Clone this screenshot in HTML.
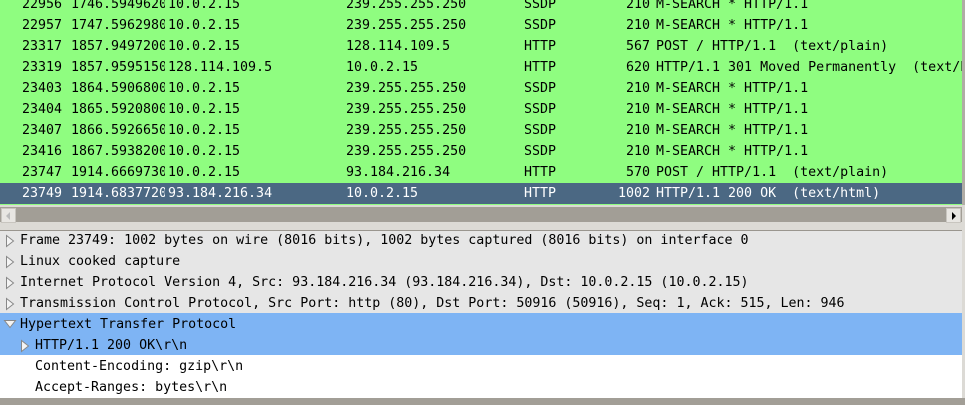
<!DOCTYPE html>
<html><head><style>
body{margin:0;width:965px;height:405px;overflow:hidden;background:#dcdad5;font-family:"DejaVu Sans Mono","Liberation Mono",monospace;font-size:13.3px;color:#000;position:relative}
.list{position:absolute;left:0;top:0;width:962px;height:205px;background:#8ffd80;overflow:hidden}
.r{position:absolute;left:0;width:962px;height:21px;line-height:21px;white-space:pre}
.r span{position:absolute;top:0;overflow:hidden}
.sel{background:#4b6883;color:#fff}
.no{left:0;width:62px;text-align:right}
.t{left:71px;width:94px}
.s{left:168px}.d{left:346px}.p{left:524px}
.l{left:600px;width:50px;text-align:right}
.i{left:656px}
.hsb{position:absolute;left:0;top:207px;width:962px;height:15px;background:#a29e96}
.btn{position:absolute;top:1px;width:13px;height:13px;background:#e8e6e2;border:1px solid #c8c5bf}
.det{position:absolute;left:0;top:230px;width:962px;height:167px;background:#e6e6e6;border-top:1px solid #9a968f;overflow:hidden}
.dr{position:absolute;left:0;width:962px;height:21px;line-height:21px;white-space:pre}
.dr svg{position:absolute;top:4px}
</style></head><body>
<div class="list">
<div class="r" style="top:-6px"><span class="no">22956</span><span class="t">1746.594962000</span><span class="s">10.0.2.15</span><span class="d">239.255.255.250</span><span class="p">SSDP</span><span class="l">210</span><span class="i">M-SEARCH * HTTP/1.1</span></div>
<div class="r" style="top:15px"><span class="no">22957</span><span class="t">1747.596298000</span><span class="s">10.0.2.15</span><span class="d">239.255.255.250</span><span class="p">SSDP</span><span class="l">210</span><span class="i">M-SEARCH * HTTP/1.1</span></div>
<div class="r" style="top:36px"><span class="no">23317</span><span class="t">1857.949720000</span><span class="s">10.0.2.15</span><span class="d">128.114.109.5</span><span class="p">HTTP</span><span class="l">567</span><span class="i">POST / HTTP/1.1  (text/plain)</span></div>
<div class="r" style="top:57px"><span class="no">23319</span><span class="t">1857.959515000</span><span class="s">128.114.109.5</span><span class="d">10.0.2.15</span><span class="p">HTTP</span><span class="l">620</span><span class="i">HTTP/1.1 301 Moved Permanently  (text/html)</span></div>
<div class="r" style="top:78px"><span class="no">23403</span><span class="t">1864.590680000</span><span class="s">10.0.2.15</span><span class="d">239.255.255.250</span><span class="p">SSDP</span><span class="l">210</span><span class="i">M-SEARCH * HTTP/1.1</span></div>
<div class="r" style="top:99px"><span class="no">23404</span><span class="t">1865.592080000</span><span class="s">10.0.2.15</span><span class="d">239.255.255.250</span><span class="p">SSDP</span><span class="l">210</span><span class="i">M-SEARCH * HTTP/1.1</span></div>
<div class="r" style="top:120px"><span class="no">23407</span><span class="t">1866.592665000</span><span class="s">10.0.2.15</span><span class="d">239.255.255.250</span><span class="p">SSDP</span><span class="l">210</span><span class="i">M-SEARCH * HTTP/1.1</span></div>
<div class="r" style="top:141px"><span class="no">23416</span><span class="t">1867.593820000</span><span class="s">10.0.2.15</span><span class="d">239.255.255.250</span><span class="p">SSDP</span><span class="l">210</span><span class="i">M-SEARCH * HTTP/1.1</span></div>
<div class="r" style="top:162px"><span class="no">23747</span><span class="t">1914.666973000</span><span class="s">10.0.2.15</span><span class="d">93.184.216.34</span><span class="p">HTTP</span><span class="l">570</span><span class="i">POST / HTTP/1.1  (text/plain)</span></div>
<div class="r sel" style="top:183px"><span class="no">23749</span><span class="t">1914.683772000</span><span class="s">93.184.216.34</span><span class="d">10.0.2.15</span><span class="p">HTTP</span><span class="l">1002</span><span class="i">HTTP/1.1 200 OK  (text/html)</span></div>
</div>
<div style="position:absolute;left:962px;top:0;width:3px;height:205px;background:#b0aca5"></div>
<div class="hsb"><div class="btn" style="left:1px"><div style="position:absolute;left:4px;top:3px;border-right:4px solid #bbb;border-top:4px solid transparent;border-bottom:4px solid transparent"></div></div><div class="btn" style="left:946px"><div style="position:absolute;left:5px;top:3px;border-left:4px solid #000;border-top:4px solid transparent;border-bottom:4px solid transparent"></div></div></div>
<div class="det">
<div class="dr" style="top:-1px"><svg style="left:5px" width="10" height="14"><path d="M1.5 1.5 L8.5 7 L1.5 12.5 Z" fill="#f4f4f4" stroke="#888"/></svg><span style="position:absolute;left:20px">Frame 23749: 1002 bytes on wire (8016 bits), 1002 bytes captured (8016 bits) on interface 0</span></div>
<div class="dr" style="top:20px"><svg style="left:5px" width="10" height="14"><path d="M1.5 1.5 L8.5 7 L1.5 12.5 Z" fill="#f4f4f4" stroke="#888"/></svg><span style="position:absolute;left:20px">Linux cooked capture</span></div>
<div class="dr" style="top:41px"><svg style="left:5px" width="10" height="14"><path d="M1.5 1.5 L8.5 7 L1.5 12.5 Z" fill="#f4f4f4" stroke="#888"/></svg><span style="position:absolute;left:20px">Internet Protocol Version 4, Src: 93.184.216.34 (93.184.216.34), Dst: 10.0.2.15 (10.0.2.15)</span></div>
<div class="dr" style="top:62px"><svg style="left:5px" width="10" height="14"><path d="M1.5 1.5 L8.5 7 L1.5 12.5 Z" fill="#f4f4f4" stroke="#888"/></svg><span style="position:absolute;left:20px">Transmission Control Protocol, Src Port: http (80), Dst Port: 50916 (50916), Seq: 1, Ack: 515, Len: 946</span></div>
<div style="position:absolute;left:0;top:82px;width:962px;height:42px;background:#7eb4f4"></div>
<div style="position:absolute;left:0;top:124px;width:962px;height:50px;background:#fff"></div>
<div class="dr" style="top:83px"><svg style="left:3px;top:5px" width="14" height="10"><path d="M1.5 1.5 L12.5 1.5 L7 8.5 Z" fill="#f4f4f4" stroke="#888"/></svg><span style="position:absolute;left:20px">Hypertext Transfer Protocol</span></div>
<div class="dr" style="top:104px"><svg style="left:20px" width="10" height="14"><path d="M1.5 1.5 L8.5 7 L1.5 12.5 Z" fill="#f4f4f4" stroke="#888"/></svg><span style="position:absolute;left:35px">HTTP/1.1 200 OK\r\n</span></div>
<div class="dr" style="top:125px"><span style="position:absolute;left:35px">Content-Encoding: gzip\r\n</span></div>
<div class="dr" style="top:146px"><span style="position:absolute;left:35px">Accept-Ranges: bytes\r\n</span></div>
</div>
<div style="position:absolute;left:0;top:398px;width:965px;height:7px;background:#a29e96"></div>
</body></html>
